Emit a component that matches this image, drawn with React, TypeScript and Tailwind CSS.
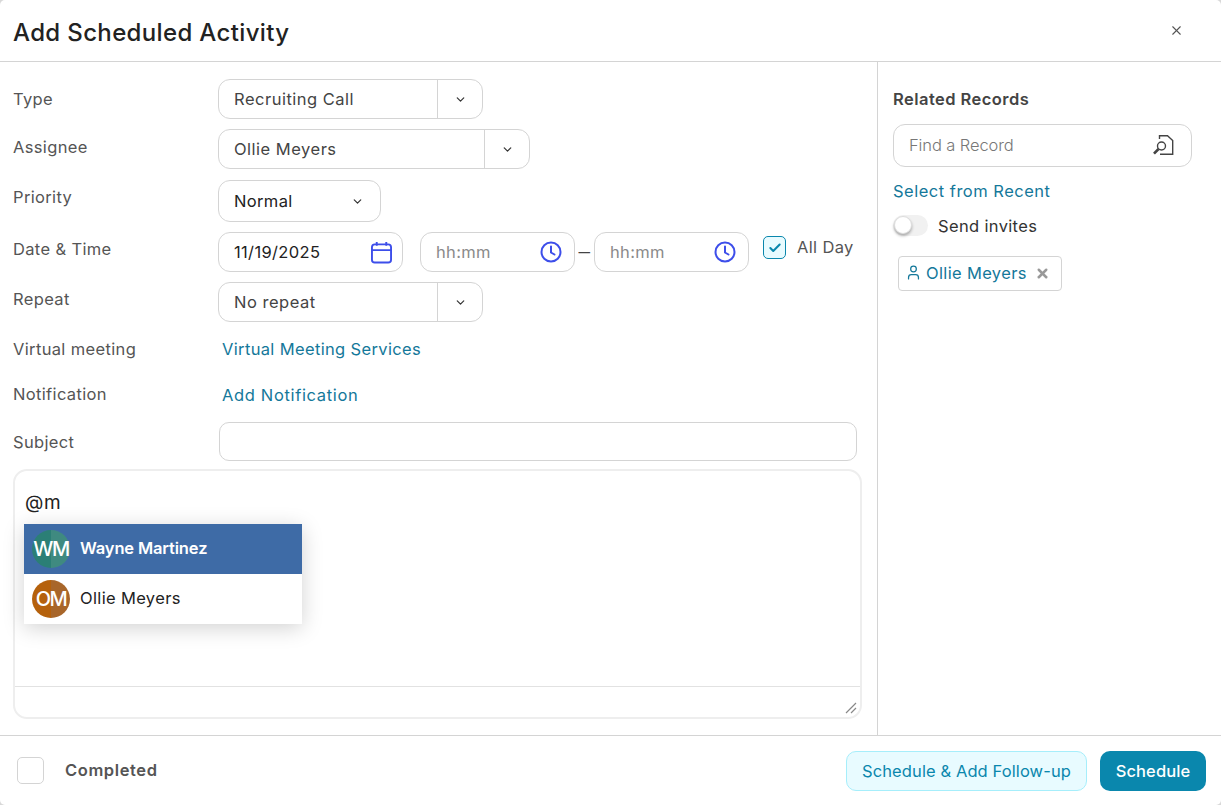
import { FC, ReactNode } from "react";
import { ChevronDown, X, User, Check } from "lucide-react";

const Chevron: FC = () => (
  <ChevronDown className="w-[13px] h-[13px] text-[#333]" strokeWidth={2.25} />
);

const SplitSelect: FC<{ value: string; mainWidth: string; width: string }> = ({
  value,
  mainWidth,
  width,
}) => (
  <div
    className={`flex h-10 rounded-[12px] border border-[#d4d4d4] bg-white tracking-[0.5px] text-[#444] ${width}`}
  >
    <div className={`flex items-center pl-[15px] ${mainWidth}`}>{value}</div>
    <div className="flex flex-1 items-center justify-center border-l border-[#d4d4d4]">
      <Chevron />
    </div>
  </div>
);

const Row: FC<{ label: string; children: ReactNode; className: string; labelClass?: string }> = ({
  label,
  children,
  className,
  labelClass = "",
}) => (
  <div className={`flex items-center ${className}`}>
    <div className={`w-[205px] shrink-0 text-[#555] ${labelClass}`}>{label}</div>
    {children}
  </div>
);

const ClockIcon: FC = () => (
  <svg viewBox="0 0 22 22" className="w-[22px] h-[22px]" fill="none" stroke="#3d4eea" strokeWidth="2">
    <circle cx="11" cy="11" r="9.5" />
    <path d="M11 5.5V11.5L14.5 13.5" strokeLinecap="round" />
  </svg>
);

const TimeInput: FC = () => (
  <div className="flex h-10 w-[155px] items-center justify-between rounded-[12px] border border-[#d4d4d4] pl-[15px] pr-[12px] text-[#8a8a8a]">
    <span>hh:mm</span>
    <ClockIcon />
  </div>
);

const MentionItem: FC<{ initials: string; name: string; active?: boolean }> = ({
  initials,
  name,
  active,
}) => (
  <div
    className={`flex h-[50px] items-center pl-2 ${active ? "bg-[#3e6ba6] text-white font-semibold tracking-[-0.15px]" : "bg-white text-[#222]"}`}
  >
    <div
      className={`flex h-[38px] w-[38px] items-center justify-center rounded-full text-[20px] font-medium tracking-[-1.5px] text-white ${
        active
          ? "bg-[linear-gradient(90deg,#2b7f76_50%,#3f8a80_50%)]"
          : "bg-[linear-gradient(90deg,#b5610c_50%,#a8662a_50%)]"
      }`}
    >
      {initials}
    </div>
    <span className="ml-[10px]">{name}</span>
  </div>
);

export default function App() {
  return (
    <div className="h-[805px] w-[1221px] bg-[#d8d8d8]">
      <div className="flex h-full w-full flex-col overflow-hidden rounded-[5px] bg-white text-[16.5px] font-['Inter',sans-serif] tracking-[0.35px]">
        <header className="flex h-[62px] shrink-0 items-center justify-between border-b border-[#d4d4d4] pl-[13px] pr-[37px]">
          <h1 className="mt-[5px] text-[24px] font-medium text-[#222] tracking-[0.35px]">Add Scheduled Activity</h1>
          <X className="w-[15px] h-[15px] text-[#555]" strokeWidth={1.75} />
        </header>

        <div className="flex min-h-0 flex-1">
          <main className="flex w-[878px] shrink-0 flex-col border-r border-[#d4d4d4] pl-[13px]">
            <Row label="Type" className="mt-[17px]" labelClass="mt-[1px]">
              <SplitSelect value="Recruiting Call" width="w-[265px]" mainWidth="w-[218px]" />
            </Row>
            <Row label="Assignee" className="mt-[10px]" labelClass="-mt-[3px]">
              <SplitSelect value="Ollie Meyers" width="w-[312px]" mainWidth="w-[265px]" />
            </Row>
            <Row label="Priority" className="mt-[11px]" labelClass="-mt-[7px]">
              <div className="flex h-[42px] w-[163px] items-center justify-between rounded-[12px] border border-[#d4d4d4] pl-[15px] pr-[16px] text-[#222]">
                <span>Normal</span>
                <Chevron />
              </div>
            </Row>
            <Row label="Date & Time" className="mt-[10px]" labelClass="-mt-[5px]">
              <div className="flex h-10 w-[185px] items-center justify-between rounded-[12px] border border-[#d4d4d4] pl-[15px] pr-[10px] text-[#222]">
                <span>11/19/2025</span>
                <svg viewBox="0 0 22 24" className="w-[21px] h-[23px]" fill="none" stroke="#3d4eea" strokeWidth="2">
                  <rect x="1" y="3.5" width="20" height="19" rx="3" />
                  <path d="M1 9.5H21M6 1V5M16 1V5" />
                </svg>
              </div>
              <div className="ml-[17px]">
                <TimeInput />
              </div>
              <span className="w-[19px] text-center text-[#444] scale-x-[1.4]">–</span>
              <TimeInput />
              <div className="-mt-[9px] ml-[14px] flex items-center">
                <div className="flex h-[23px] w-[23px] items-center justify-center rounded-[5px] border border-[#0a87ad] bg-[#e8fbff]">
                  <Check className="w-[14px] h-[14px] text-[#0a87ad]" strokeWidth={3.5} />
                </div>
                <span className="ml-[11px] text-[#555]">All Day</span>
              </div>
            </Row>
            <Row label="Repeat" className="mt-[10px]" labelClass="-mt-[5px]">
              <SplitSelect value="No repeat" width="w-[265px]" mainWidth="w-[218px]" />
            </Row>
            <Row label="Virtual meeting" className="mt-[15px]">
              <span className="ml-[4px] text-[#14789a]">Virtual Meeting Services</span>
            </Row>
            <Row label="Notification" className="mt-[19px]">
              <span className="ml-[4px] mt-[2px] tracking-[0.65px] text-[#14789a]">Add Notification</span>
            </Row>
            <Row label="Subject" className="mt-[14px]" labelClass="mt-[2px]">
              <div className="ml-[1px] h-[39px] w-[638px] rounded-[10px] border border-[#d4d4d4]" />
            </Row>

            <div className="relative mt-[8px] flex h-[250px] w-[849px] flex-col rounded-[14px] border-2 border-[#eeeeee]">
              <div className="flex-1 pl-[10px] pt-[18px] text-[19px] tracking-[0.6px] text-[#222]">@m</div>
              <div className="relative h-[31px] border-t border-[#e2e2e2]">
                <svg viewBox="0 0 12 12" className="absolute bottom-[3px] right-[3px] w-3 h-3" stroke="#888" strokeWidth="1.2">
                  <path d="M1 11L11 1M6 11L11 6" />
                </svg>
              </div>
              <div className="absolute left-[9px] top-[53px] w-[278px] overflow-hidden shadow-[0_4px_20px_rgba(0,0,0,0.18)]">
                <MentionItem initials="WM" name="Wayne Martinez" active />
                <MentionItem initials="OM" name="Ollie Meyers" />
              </div>
            </div>
          </main>

          <aside className="flex-1 pl-[15px] pr-[29px]">
            <h2 className="mt-[25px] font-semibold tracking-[0.45px] text-[#444]">Related Records</h2>
            <div className="mt-[12px] flex h-[43px] items-center justify-between rounded-[12px] border border-[#d4d4d4] pl-[15px] pr-[17px] font-light tracking-[-0.1px] text-[#777]">
              <span>Find a Record</span>
              <svg viewBox="0 0 22 22" className="w-[22px] h-[22px]" fill="none" stroke="#444" strokeWidth="1.4">
                <path d="M7.5 5V1.7H15.5L20.7 6.5V20.3H8" />
                <circle cx="9.5" cy="12" r="4" />
                <path d="M6.5 15L2 19.7" strokeWidth="2.6" />
              </svg>
            </div>
            <div className="mt-[12px] tracking-[0.5px] text-[#14789a]">Select from Recent</div>
            <div className="mt-[10px] flex items-center">
              <div className="relative h-[21px] w-[35px] rounded-full bg-[#f1f1f1]">
                <div className="absolute left-[1px] top-[1px] h-[18px] w-[18px] rounded-full border border-[#ddd] bg-white shadow-[0_2px_3px_rgba(0,0,0,0.3)]" />
              </div>
              <span className="ml-[10px] text-[#333]">Send invites</span>
            </div>
            <div className="ml-[5px] mt-[18px] flex h-[35px] w-[164px] items-center rounded-[4px] border border-[#d4d4d4] pl-[6px] text-[#14789a]">
              <User className="-mt-[2px] w-[17px] h-[17px]" strokeWidth={1.75} />
              <span className="ml-[4px]">Ollie Meyers</span>
              <X className="ml-[8px] -mt-[1px] w-[15px] h-[15px] text-[#999]" strokeWidth={4} />
            </div>
          </aside>
        </div>

        <footer className="flex h-[70px] shrink-0 items-center justify-between border-t border-[#d4d4d4] pl-[17px] pr-[15px]">
          <div className="flex items-center">
            <div className="h-[27px] w-[27px] rounded-[5px] border border-[#d4d4d4]" />
            <span className="ml-[21px] font-semibold tracking-[0.6px] text-[#555]">Completed</span>
          </div>
          <div className="flex items-center">
            <button className="flex h-10 w-[241px] items-center justify-center rounded-[10px] border border-[#a6eefb] bg-[#e8fbff] tracking-[0.1px] text-[#0a87ad]">
              <span className="mt-[1px]">Schedule &amp; Add Follow-up</span>
            </button>
            <button className="ml-[13px] flex h-10 w-[106px] items-center justify-center rounded-[10px] bg-[#0a87ad] font-medium tracking-[0.1px] text-white">
              <span className="mt-[1px]">Schedule</span>
            </button>
          </div>
        </footer>
      </div>
    </div>
  );
}
